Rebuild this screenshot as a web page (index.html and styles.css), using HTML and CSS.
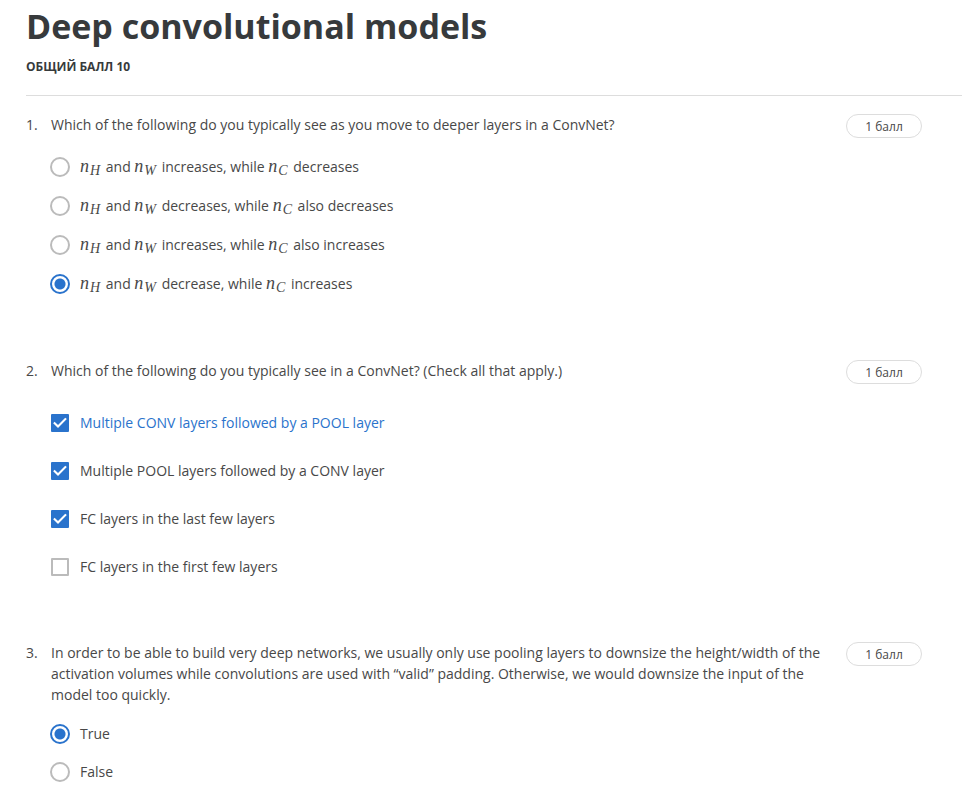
FILE: index.html
```html
<!DOCTYPE html>
<html lang="en">
<head>
<meta charset="utf-8">
<title>Deep convolutional models</title>
<link rel="stylesheet" href="styles.css">
</head>
<body>
<main class="quiz">
  <header class="quiz-header">
    <h1>Deep convolutional models</h1>
    <p class="total" lang="ru">ОБЩИЙ БАЛЛ 10</p>
  </header>
  <form>
    <section class="question">
      <span class="number">1.</span>
      <div class="content">
        <p class="prompt">Which of the following do you typically see as you move to deeper layers in a ConvNet?</p>
        <div class="options">
          <label class="option"><input type="radio" name="q1"><span><i class="math">n<sub>H</sub></i> and <i class="math">n<sub>W</sub></i> increases, while <i class="math">n<sub>C</sub></i> decreases</span></label>
          <label class="option"><input type="radio" name="q1"><span><i class="math">n<sub>H</sub></i> and <i class="math">n<sub>W</sub></i> decreases, while <i class="math">n<sub>C</sub></i> also decreases</span></label>
          <label class="option"><input type="radio" name="q1"><span><i class="math">n<sub>H</sub></i> and <i class="math">n<sub>W</sub></i> increases, while <i class="math">n<sub>C</sub></i> also increases</span></label>
          <label class="option"><input type="radio" name="q1" checked><span><i class="math">n<sub>H</sub></i> and <i class="math">n<sub>W</sub></i> decrease, while <i class="math">n<sub>C</sub></i> increases</span></label>
        </div>
      </div>
      <span class="points" lang="ru">1 балл</span>
    </section>
    <section class="question">
      <span class="number">2.</span>
      <div class="content">
        <p class="prompt">Which of the following do you typically see in a ConvNet? (Check all that apply.)</p>
        <div class="options options-check">
          <label class="option active"><input type="checkbox" checked><span>Multiple CONV layers followed by a POOL layer</span></label>
          <label class="option"><input type="checkbox" checked><span>Multiple POOL layers followed by a CONV layer</span></label>
          <label class="option"><input type="checkbox" checked><span>FC layers in the last few layers</span></label>
          <label class="option"><input type="checkbox"><span>FC layers in the first few layers</span></label>
        </div>
      </div>
      <span class="points" lang="ru">1 балл</span>
    </section>
    <section class="question">
      <span class="number">3.</span>
      <div class="content">
        <p class="prompt">In order to be able to build very deep networks, we usually only use pooling layers to downsize the height/width of the activation volumes while convolutions are used with “valid” padding. Otherwise, we would downsize the input of the model too quickly.</p>
        <div class="options options-short">
          <label class="option"><input type="radio" name="q3" checked><span>True</span></label>
          <label class="option"><input type="radio" name="q3"><span>False</span></label>
        </div>
      </div>
      <span class="points" lang="ru">1 балл</span>
    </section>
  </form>
</main>
</body>
</html>
```
FILE: styles.css
```css
* {
  box-sizing: border-box;
}

body {
  margin: 0;
  background: #fff;
  color: #484848;
  font: 14px/21px "Open Sans", sans-serif;
}

h1,
p {
  margin: 0;
}

.quiz {
  padding: 4px 9px 16px 26px;
}

.quiz-header {
  padding-bottom: 18px;
  border-bottom: 1px solid #ddd;
  color: #373a3c;
}

h1 {
  font-size: 34px;
  line-height: 44px;
  font-weight: 700;
}

.total {
  margin-top: 8px;
  font-size: 12px;
  font-weight: 700;
}

.question {
  display: grid;
  grid-template-columns: 25px minmax(0, 1fr) 76px;
  align-items: start;
  margin-right: 40px;
  padding-top: 18px;
  padding-bottom: 48px;
}

.question + .question {
  padding-bottom: 47px;
}

.question:last-child {
  padding-bottom: 0;
}

.prompt {
  padding-right: 24px;
}

.points {
  height: 24px;
  border: 1px solid #ddd;
  border-radius: 12px;
  font-size: 12px;
  line-height: 24px;
  text-align: center;
}

.options {
  display: grid;
  gap: 18px;
  margin-top: 21px;
}

.options-check {
  gap: 27px;
  margin-top: 31px;
}

.options-short {
  gap: 17px;
  margin-top: 18px;
}

.option {
  display: flex;
  align-items: center;
  gap: 11px;
  height: 21px;
}

.active {
  color: #2a73cc;
}

.math {
  font-family: "Liberation Serif", serif;
  font-size: 18px;
  line-height: 1;
}

.math sub {
  margin: 0 2px 0 1px;
  font-size: 14px;
  line-height: 0;
  vertical-align: -3px;
}

input {
  flex: none;
  appearance: none;
  margin: 0;
  background: #fff;
  border: 2px solid #bbb;
}

input[type="radio"] {
  width: 20px;
  height: 20px;
  margin: 0 -1px;
  border-radius: 50%;
}

input[type="radio"]:checked {
  border-color: #2a73cc;
  background-image: radial-gradient(circle, #2a73cc 5px, transparent 6px);
}

input[type="checkbox"] {
  width: 18px;
  height: 18px;
  border-radius: 1px;
}

input[type="checkbox"]:checked {
  border: 0;
  background: #2a73cc;
}

input[type="checkbox"]:checked::before {
  content: "";
  display: block;
  width: 18px;
  height: 18px;
  background: #fff;
  clip-path: polygon(12% 54%, 20% 46%, 39% 64%, 79% 23%, 88% 31%, 39% 80%);
}
```
